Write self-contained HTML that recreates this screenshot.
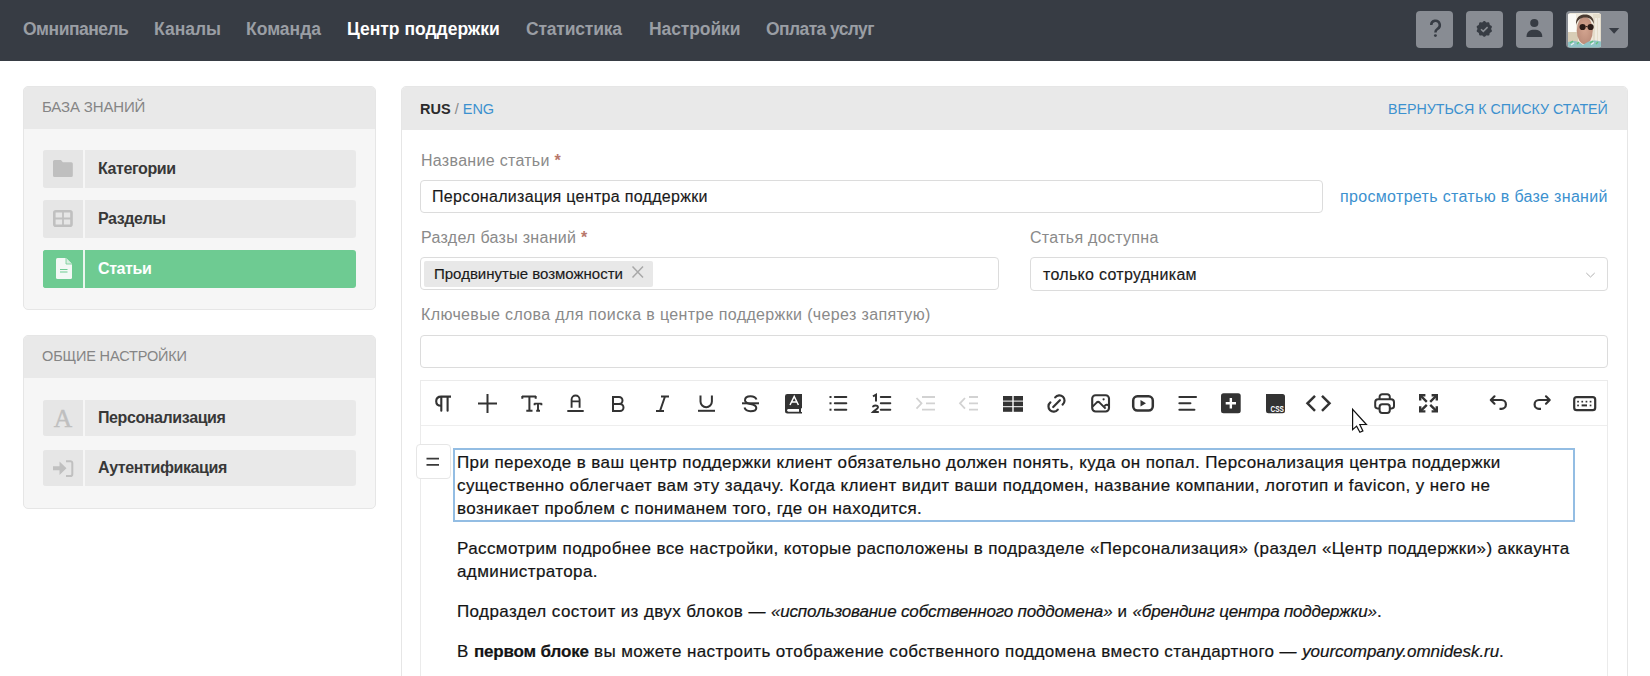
<!DOCTYPE html>
<html><head><meta charset="utf-8">
<style>
*{box-sizing:border-box;margin:0;padding:0}
html,body{width:1650px;height:676px;overflow:hidden;background:#fff;font-family:"Liberation Sans",sans-serif;position:relative}
.a{position:absolute;white-space:nowrap}
#hdr{position:absolute;left:0;top:0;width:1650px;height:61px;background:#373c44}
.nav{position:absolute;top:17px;font-weight:bold;font-size:17.5px;line-height:24px;color:#9a9ea4}
.hbtn{position:absolute;top:11px;width:37px;height:37px;background:#888c93;border-radius:4px;overflow:hidden}
.panel{position:absolute;background:#f6f6f6;border:1px solid #e6e6e6;border-radius:5px;overflow:hidden}
.ph{position:absolute;left:0;top:0;right:0;height:42px;background:#e9e9e9}
.pht{position:absolute;left:18px;top:11px;font-size:15px;line-height:18px;color:#858585;letter-spacing:-0.15px}
.btn{position:absolute;left:19px;width:313px;height:38px;background:#e9e9e9;border-radius:3px;overflow:hidden}
.btn .ic{position:absolute;left:0;top:0;width:42px;height:38px;background:#e6e6e6;border-right:2px solid #f6f6f6}
.btn .t{position:absolute;left:55px;top:9.5px;font-weight:bold;font-size:16px;line-height:18px;color:#383838;letter-spacing:-0.4px}
.btn svg{position:absolute;left:0;top:0}
.btn.act{background:#6ecb92}
.btn.act .ic{background:#6ecb92;border-right:2px solid #e9f6ee}
.btn.act .t{color:#fff}
.lbl{position:absolute;font-size:16px;line-height:20px;color:#8a8a8a;letter-spacing:0.3px}
.lbl b{color:#b8786c;font-weight:bold}
.inp{position:absolute;border:1px solid #dcdcdc;border-radius:4px;background:#fff}
.txt{font-size:16px;line-height:20px;color:#1a1a1a;letter-spacing:0.3px;-webkit-text-stroke:0.15px #1a1a1a}
.body{position:absolute;left:457px;font-size:17px;line-height:23px;color:#141414;-webkit-text-stroke:0.2px #141414;letter-spacing:0.4px;white-space:nowrap}
.body i{letter-spacing:-0.05px}
.body b{letter-spacing:-0.15px}
</style></head><body>

<div id="hdr">
  <div class="nav a" style="left:23px;letter-spacing:-0.5px">Омнипанель</div>
  <div class="nav a" style="left:154px">Каналы</div>
  <div class="nav a" style="left:246px">Команда</div>
  <div class="nav a" style="left:347px;color:#fff">Центр поддержки</div>
  <div class="nav a" style="left:526px;letter-spacing:-0.2px">Статистика</div>
  <div class="nav a" style="left:649px;letter-spacing:-0.1px">Настройки</div>
  <div class="nav a" style="left:766px;letter-spacing:-0.6px">Оплата услуг</div>

  <div class="hbtn" style="left:1416px"></div>
  <div class="hbtn" style="left:1466px"></div>
  <div class="hbtn" style="left:1516px"></div>
  <div class="hbtn" style="left:1566px;width:62px"></div>
</div>

<!-- left panel 1 -->
<div class="panel" style="left:23px;top:86px;width:353px;height:224px">
  <div class="ph"><div class="pht a">БАЗА ЗНАНИЙ</div></div>
  <div class="btn" style="top:63px"><div class="ic"></div><div class="t a">Категории</div></div>
  <div class="btn" style="top:113px"><div class="ic"></div><div class="t a">Разделы</div></div>
  <div class="btn act" style="top:163px"><div class="ic"></div><div class="t a">Статьи</div></div>
</div>

<!-- left panel 2 -->
<div class="panel" style="left:23px;top:335px;width:353px;height:174px">
  <div class="ph"><div class="pht a" style="font-size:14.5px">ОБЩИЕ НАСТРОЙКИ</div></div>
  <div class="btn" style="top:64px;height:36px"><div class="ic" style="height:36px"></div><div class="t a" style="top:9px">Персонализация</div></div>
  <div class="btn" style="top:114px;height:36px"><div class="ic" style="height:36px"></div><div class="t a" style="top:9px">Аутентификация</div></div>
</div>

<!-- main panel -->
<div class="panel" style="left:401px;top:86px;width:1227px;height:620px;background:#fff">
  <div class="ph" style="height:43px"></div>
</div>
<div class="a" style="left:420px;top:100px;font-size:14.5px;line-height:18px;color:#888"><b style="color:#2b2b2b">RUS</b> / <span style="color:#3c91cf">ENG</span></div>
<div class="a" style="left:1388px;top:99.5px;font-size:14.25px;line-height:18px;color:#3c91cf">ВЕРНУТЬСЯ К СПИСКУ СТАТЕЙ</div>

<div class="lbl a" style="left:421px;top:151px">Название статьи <b>*</b></div>
<div class="inp" style="left:420px;top:180px;width:903px;height:33px"></div>
<div class="txt a" style="left:432px;top:187px">Персонализация центра поддержки</div>
<div class="a" style="left:1340px;top:187px;font-size:16px;line-height:20px;color:#3c91cf;letter-spacing:0.33px">просмотреть статью в базе знаний</div>

<div class="lbl a" style="left:421px;top:228px">Раздел базы знаний <b>*</b></div>
<div class="inp" style="left:420px;top:257px;width:579px;height:33px"></div>
<div class="a" style="left:424px;top:261px;width:229px;height:26px;background:#e8e8e8;border-radius:2px"></div>
<div class="a" style="left:434px;top:264px;font-size:15px;line-height:20px;color:#1a1a1a;-webkit-text-stroke:0.15px #1a1a1a">Продвинутые возможности</div>

<div class="lbl a" style="left:1030px;top:228px">Статья доступна</div>
<div class="inp" style="left:1030px;top:257px;width:578px;height:34px"></div>
<div class="txt a" style="left:1043px;top:265px">только сотрудникам</div>

<div class="lbl a" style="left:421px;top:305px;letter-spacing:0.36px">Ключевые слова для поиска в центре поддержки (через запятую)</div>
<div class="inp" style="left:420px;top:335px;width:1188px;height:33px"></div>

<!-- editor -->
<div class="a" style="left:420px;top:380px;width:1188px;height:300px;border:1px solid #ebebeb;border-bottom:none"></div>
<div class="a" style="left:421px;top:425px;width:1186px;height:1px;background:#eeeeee"></div>

<div class="a" style="left:416px;top:444px;width:35px;height:35px;border:1px solid #e6e6e6;border-radius:4px;background:#fff"></div>
<div class="a" style="left:453px;top:448px;width:1122px;height:74px;border:2px solid #93bde3"></div>

<div class="body" style="top:451px">При переходе в ваш центр поддержки клиент обязательно должен понять, куда он попал. Персонализация центра поддержки</div>
<div class="body" style="top:474px">существенно облегчает вам эту задачу. Когда клиент видит ваши поддомен, название компании, логотип и favicon, у него не</div>
<div class="body" style="top:497px">возникает проблем с пониманем того, где он находится.</div>
<div class="body" style="top:537px">Рассмотрим подробнее все настройки, которые расположены в подразделе «Персонализация» (раздел «Центр поддержки») аккаунта</div>
<div class="body" style="top:559.5px">администратора.</div>
<div class="body" style="top:600px">Подраздел состоит из двух блоков — <i style="letter-spacing:-0.16px">«использование собственного поддомена»</i> и <i style="letter-spacing:-0.2px">«брендинг центра поддержки»</i>.</div>
<div class="body" style="top:639.5px">В <b>первом блоке</b> вы можете настроить отображение собственного поддомена вместо стандартного — <i>yourcompany.omnidesk.ru</i>.</div>

<!-- overlay icons -->
<svg class="a" style="left:0;top:0" width="1650" height="676" viewBox="0 0 1650 676">
 <g fill="none" stroke="#333" stroke-width="2" stroke-linecap="butt">
  <!-- 1 pilcrow -->
  <path d="M451,396.6 H441.2 C438,396.6 436.2,398.6 436.2,401.2 C436.2,403.8 438,405.8 441.2,405.8" stroke-width="2.1"/>
  <path d="M441.3,397 V410.8 M447.6,397 V410.8" stroke-width="2.1" stroke-linecap="round"/>
  <!-- 2 plus -->
  <path d="M478,403.5 H497 M487.5,394 V413"/>
  <!-- 3 Tt -->
  <path d="M522,396.4 H536 M522.3,396 V398.8 M535.7,396 V398.8 M529.4,396.4 V410.8 M526.3,410.8 H532.5" stroke-width="2"/>
  <path d="M534.3,403.6 H541.7 M534.6,403.2 V405.3 M541.4,403.2 V405.3 M538,403.6 V410.8 M536.2,410.8 H540" stroke-width="1.9"/>
  <!-- 4 A underline -->
  <path d="M571.6,407.8 V399.6 A4,4.1 0 0 1 579.6,399.6 V407.8 M571.6,401.4 H579.6" stroke-width="1.9"/>
  <path d="M567.3,411 H583.7" stroke-width="2"/>
  <!-- 5 B -->
  <path d="M613,397 H619 A3.5,3.5 0 0 1 619,404 H613 Z M613,404 H620 A3.5,3.5 0 0 1 620,411 H613 Z"/>
  <!-- 6 I -->
  <path d="M661,396.5 H669 M656,411 H664 M665,396.5 L660,411"/>
  <!-- 7 U -->
  <path d="M700.5,395.5 V401.5 A5.7,5.7 0 0 0 711.9,401.5 V395.5"/>
  <path d="M698,410.8 H715"/>
  <!-- 8 S -->
  <path d="M756.5,399.5 C755.5,396.8 753,396.2 750.5,396.2 C747,396.2 745,397.8 745,400.3 C745,403 748,403.5 750.5,404 C754,404.6 756.3,405.8 756.3,408 C756.3,410.5 753.5,411.2 750.5,411.2 C747.5,411.2 745.3,410 744.5,407.5"/>
  <path d="M742,403.3 H759"/>
  <!-- 10 list -->
  <path d="M834.8,397 H846.3 M834.8,403.3 H846.3 M834.8,409.7 H846.3" stroke-linecap="round"/>
  <rect x="829.5" y="396" width="2" height="2" fill="#333" stroke="none"/>
  <rect x="829.5" y="402.3" width="2" height="2" fill="#333" stroke="none"/>
  <rect x="829.5" y="408.7" width="2" height="2" fill="#333" stroke="none"/>
  <!-- 11 numbered -->
  <path d="M880.8,397 H890.3 M880.8,403.3 H890.3 M880.8,409.7 H890.3" stroke-linecap="round"/>
  <path d="M873,396.3 L876,394.6 V401.6" stroke-width="2"/>
  <path d="M873,407.3 C873,405 878,404.8 878,407.3 C878,408.8 874.5,410.5 873,412 H878.8" stroke-width="1.9"/>
  <!-- 12 indent (disabled) -->
  <g stroke="#d2d2d2" stroke-width="1.8">
   <path d="M916.5,398 L921.5,403.3 L916.5,408.6"/>
   <path d="M922,397 H935 M926,403.3 H935 M922,409.7 H935"/>
   <path d="M965,398 L960,403.3 L965,408.6"/>
   <path d="M969,397 H978 M969,403.3 H978 M969,409.7 H978"/>
  </g>
  <!-- 14 table -->
  <g fill="#333" stroke="none">
   <rect x="1003" y="396" width="9.3" height="4.6"/><rect x="1013.7" y="396" width="9.3" height="4.6"/>
   <rect x="1003" y="401.6" width="9.3" height="4.6"/><rect x="1013.7" y="401.6" width="9.3" height="4.6"/>
   <rect x="1003" y="407.2" width="9.3" height="4.6"/><rect x="1013.7" y="407.2" width="9.3" height="4.6"/>
  </g>
  <!-- 15 link -->
  <g stroke-width="2.2" stroke-linecap="round">
   <path d="M1055.2,397.4 A5.2,5.2 0 1 1 1062.6,404.6"/>
   <path d="M1057.8,409.6 A5.2,5.2 0 1 1 1050.4,402.4"/>
   <path d="M1053.2,407 L1059.9,400.2"/>
  </g>
  <!-- 16 image -->
  <rect x="1092.2" y="395.2" width="16.8" height="16.3" rx="3.4" stroke-width="2.1"/>
  <path d="M1092.6,406.6 L1096.6,402.6 Q1098.1,401.2 1099.6,402.6 L1105.6,408.6" stroke-width="2"/>
  <path d="M1104.3,406.3 Q1106.6,403.6 1109,405.9" stroke-width="2"/>
  <circle cx="1103.6" cy="399.3" r="1.1" fill="#333" stroke="none"/>
  <!-- 17 video -->
  <rect x="1133.2" y="396.3" width="19.6" height="14.2" rx="4.2" stroke-width="2.5"/>
  <path d="M1140.5,400 V406.6 L1146,403.3 Z" fill="#333" stroke="none"/>
  <!-- 18 align -->
  <path d="M1179.4,397 H1196 M1179.4,403.3 H1190.4 M1179.4,409.7 H1194.4" stroke-width="2.1" stroke-linecap="round"/>
  <!-- 19 plus box -->
  <rect x="1221" y="393.3" width="19.7" height="19.9" rx="2.5" fill="#333" stroke="none"/>
  <path d="M1225.7,403.2 H1236 M1230.85,398 V408.4" stroke="#fff" stroke-width="2.4"/>
  <!-- 20 css -->
  <path d="M1266,394 H1282.5 A2.5,2.5 0 0 1 1285,396.5 V410.8 A2.5,2.5 0 0 1 1282.5,413.3 H1268.5 A2.5,2.5 0 0 1 1266,410.8 Z" fill="#333" stroke="none"/>
  <text x="1270.5" y="411.8" font-family="Liberation Sans" font-weight="bold" font-size="9.4" fill="#fff" stroke="none" stroke-width="0" textLength="13.4" lengthAdjust="spacingAndGlyphs">CSS</text>
  <!-- 21 code -->
  <path d="M1315,395.8 L1307.5,403.3 L1315,410.8 M1322,395.8 L1329.5,403.3 L1322,410.8" stroke-width="2.5"/>
  <!-- 22 print -->
  <path d="M1379.6,399.3 V397 A2.7,2.7 0 0 1 1382.3,394.2 H1387.1 A2.7,2.7 0 0 1 1389.8,397 V399.3"/>
  <path d="M1379.6,408.4 H1377.5 A2.3,2.3 0 0 1 1375.2,406.1 V402.3 A3,3 0 0 1 1378.2,399.3 H1391 A3,3 0 0 1 1394,402.3 V406.1 A2.3,2.3 0 0 1 1391.7,408.4 H1389.8"/>
  <rect x="1379.6" y="404.3" width="10.2" height="8.6" rx="2.6"/>
  <!-- 23 fullscreen -->
  <g stroke-width="2.4">
   <path d="M1420.5,395.5 L1426.8,401.8 M1436.5,395.5 L1430.2,401.8 M1420.5,411.2 L1426.8,404.9 M1436.5,411.2 L1430.2,404.9"/>
   <path d="M1420.2,400.5 V395.3 H1425.4 M1431.6,395.3 H1436.8 V400.5 M1420.2,406.2 V411.4 H1425.4 M1431.6,411.4 H1436.8 V406.2"/>
  </g>
  <!-- 24 undo -->
  <path d="M1494.5,396.3 L1490.8,400 L1494.5,403.7" stroke-width="2.2" stroke-linecap="round" stroke-linejoin="round"/>
  <path d="M1491,400 H1501.5 A4.4,4.4 0 0 1 1501.5,408.8 H1499.5" stroke-width="2.2"/>
  <!-- 25 redo -->
  <path d="M1546,396.3 L1549.7,400 L1546,403.7" stroke-width="2.2" stroke-linecap="round" stroke-linejoin="round"/>
  <path d="M1549.5,400 H1539 A4.4,4.4 0 0 0 1539,408.8 H1541" stroke-width="2.2"/>
  <!-- 26 keyboard -->
  <rect x="1574.2" y="397.2" width="21" height="13" rx="2.5" stroke-width="2.2"/>
  <g fill="#333" stroke="none">
   <rect x="1577.2" y="400.8" width="1.7" height="1.7"/><rect x="1581.4" y="400.8" width="1.7" height="1.7"/><rect x="1585.6" y="400.8" width="1.7" height="1.7"/><rect x="1589.7" y="400.8" width="1.7" height="1.7"/>
   <rect x="1577.2" y="404.6" width="1.7" height="1.7"/><rect x="1581.6" y="404.4" width="5.4" height="2"/><rect x="1589.7" y="404.6" width="1.7" height="1.7"/>
  </g>
 </g>
 <!-- 9 A filled -->
 <path d="M787.3,394 H802 V408.2 H801 V412 H802 V413.5 H787.5 A2.5,2.5 0 0 1 785,411 V396.3 A2.3,2.3 0 0 1 787.3,394 Z" fill="#333"/>
 <path d="M790,405 L794.2,396.5 L798.4,405 M791.3,402 H797.1" fill="none" stroke="#fff" stroke-width="1.5" stroke-linejoin="miter"/>
 <path d="M788.5,409 H799 V411.7 H788.5 A1.35,1.35 0 0 1 788.5,409 Z" fill="#fff"/>
 <!-- cursor -->
 <path d="M1352.6,409.4 V429.6 L1356.6,426.1 L1359.9,432.3 L1362.9,430.9 L1359.8,424.5 H1366.4 Z" fill="#fff" stroke="#111" stroke-width="1.2" stroke-linejoin="miter"/>
 <!-- drag handle lines -->
 <path d="M426.5,458.7 H439 M426.5,464.8 H439" stroke="#3a3a3a" stroke-width="1.7"/>
 <!-- tag x -->
 <path d="M632.5,266.5 L643,277.5 M643,266.5 L632.5,277.5" stroke="#a8a8a8" stroke-width="1.5"/>
 <!-- select chevron -->
 <path d="M1586.3,273 L1590.5,277 L1594.7,273" fill="none" stroke="#b0b0b0" stroke-width="1"/>
 <!-- left panel icons -->
 <path d="M53,161.5 A1.5,1.5 0 0 1 54.5,160 H61 L62.8,162.2 H71.3 A1.5,1.5 0 0 1 72.8,163.7 V175.4 A1.5,1.5 0 0 1 71.3,176.9 H54.5 A1.5,1.5 0 0 1 53,175.4 Z" fill="#bfbfbf"/>
 <rect x="54.3" y="211.3" width="17.2" height="14.5" rx="1.5" fill="none" stroke="#c0c0c0" stroke-width="2.6"/>
 <path d="M63,211 V226 M54,218.5 H72" stroke="#c0c0c0" stroke-width="1.8"/>
 <path d="M57.5,258 H66 L72,264 V277.5 A1.5,1.5 0 0 1 70.5,279 H57.5 A1.5,1.5 0 0 1 56,277.5 V259.5 A1.5,1.5 0 0 1 57.5,258 Z" fill="#f3f8f5"/>
 <path d="M66,258 V264 H72" fill="#d8eee0" stroke="#6ecb92" stroke-width="0.8"/>
 <path d="M60,269.5 H67.5 M60,272 H67.5" stroke="#6ecb92" stroke-width="1.2"/>
 <text x="63" y="427" font-family="Liberation Serif" font-size="25.5" fill="#bfbfbf" stroke="#bfbfbf" stroke-width="0.45" text-anchor="middle">A</text>
 <path d="M53,466.3 H59.5 V461.5 L66.5,468.2 L59.5,475 V470.2 H53 Z" fill="#c0c0c0"/>
 <path d="M66,461.2 H70.5 A1.8,1.8 0 0 1 72.3,463 V474.3 A1.8,1.8 0 0 1 70.5,476.1 H66" fill="none" stroke="#c0c0c0" stroke-width="2"/>
 <!-- header icons -->
 <path d="M1431.2,25 A4.3,4.3 0 1 1 1437.6,28.8 C1436,29.9 1435.4,30.8 1435.4,32.6" fill="none" stroke="#373c44" stroke-width="2.5"/>
 <circle cx="1435.4" cy="35.6" r="1.45" fill="#373c44"/>
 <path id="badge" fill="#373c44" d="M1484.30,20.95 L1484.55,20.98 L1484.79,21.07 L1485.03,21.21 L1485.25,21.39 L1485.46,21.59 L1485.65,21.80 L1485.84,21.99 L1486.03,22.16 L1486.22,22.30 L1486.42,22.39 L1486.63,22.43 L1486.86,22.43 L1487.11,22.41 L1487.38,22.36 L1487.66,22.31 L1487.95,22.27 L1488.23,22.25 L1488.50,22.28 L1488.75,22.35 L1488.97,22.47 L1489.16,22.64 L1489.30,22.86 L1489.41,23.11 L1489.48,23.38 L1489.53,23.67 L1489.57,23.95 L1489.61,24.22 L1489.66,24.47 L1489.73,24.69 L1489.84,24.87 L1489.99,25.03 L1490.17,25.17 L1490.39,25.30 L1490.64,25.42 L1490.89,25.54 L1491.15,25.68 L1491.39,25.83 L1491.59,26.01 L1491.75,26.22 L1491.86,26.44 L1491.91,26.69 L1491.90,26.95 L1491.84,27.22 L1491.74,27.48 L1491.61,27.74 L1491.47,27.99 L1491.35,28.23 L1491.24,28.46 L1491.17,28.68 L1491.15,28.90 L1491.17,29.12 L1491.24,29.34 L1491.35,29.57 L1491.47,29.81 L1491.61,30.06 L1491.74,30.32 L1491.84,30.58 L1491.90,30.85 L1491.91,31.11 L1491.86,31.36 L1491.75,31.58 L1491.59,31.79 L1491.39,31.97 L1491.15,32.12 L1490.89,32.26 L1490.64,32.38 L1490.39,32.50 L1490.17,32.63 L1489.99,32.77 L1489.84,32.93 L1489.73,33.11 L1489.66,33.33 L1489.61,33.58 L1489.57,33.85 L1489.53,34.13 L1489.48,34.42 L1489.41,34.69 L1489.30,34.94 L1489.16,35.16 L1488.97,35.33 L1488.75,35.45 L1488.50,35.52 L1488.23,35.55 L1487.95,35.53 L1487.66,35.49 L1487.38,35.44 L1487.11,35.39 L1486.86,35.37 L1486.63,35.37 L1486.42,35.41 L1486.22,35.50 L1486.03,35.64 L1485.84,35.81 L1485.65,36.00 L1485.46,36.21 L1485.25,36.41 L1485.03,36.59 L1484.79,36.73 L1484.55,36.82 L1484.30,36.85 L1484.05,36.82 L1483.81,36.73 L1483.57,36.59 L1483.35,36.41 L1483.14,36.21 L1482.95,36.00 L1482.76,35.81 L1482.57,35.64 L1482.38,35.50 L1482.18,35.41 L1481.97,35.37 L1481.74,35.37 L1481.49,35.39 L1481.22,35.44 L1480.94,35.49 L1480.65,35.53 L1480.37,35.55 L1480.10,35.52 L1479.85,35.45 L1479.63,35.33 L1479.44,35.16 L1479.30,34.94 L1479.19,34.69 L1479.12,34.42 L1479.07,34.13 L1479.03,33.85 L1478.99,33.58 L1478.94,33.33 L1478.87,33.11 L1478.76,32.93 L1478.61,32.77 L1478.43,32.63 L1478.21,32.50 L1477.96,32.38 L1477.71,32.26 L1477.45,32.12 L1477.21,31.97 L1477.01,31.79 L1476.85,31.58 L1476.74,31.36 L1476.69,31.11 L1476.70,30.85 L1476.76,30.58 L1476.86,30.32 L1476.99,30.06 L1477.13,29.81 L1477.25,29.57 L1477.36,29.34 L1477.43,29.12 L1477.45,28.90 L1477.43,28.68 L1477.36,28.46 L1477.25,28.23 L1477.13,27.99 L1476.99,27.74 L1476.86,27.48 L1476.76,27.22 L1476.70,26.95 L1476.69,26.69 L1476.74,26.44 L1476.85,26.22 L1477.01,26.01 L1477.21,25.83 L1477.45,25.68 L1477.71,25.54 L1477.96,25.42 L1478.21,25.30 L1478.43,25.17 L1478.61,25.03 L1478.76,24.87 L1478.87,24.69 L1478.94,24.47 L1478.99,24.22 L1479.03,23.95 L1479.07,23.67 L1479.12,23.38 L1479.19,23.11 L1479.30,22.86 L1479.44,22.64 L1479.63,22.47 L1479.85,22.35 L1480.10,22.28 L1480.37,22.25 L1480.65,22.27 L1480.94,22.31 L1481.22,22.36 L1481.49,22.41 L1481.74,22.43 L1481.97,22.43 L1482.18,22.39 L1482.38,22.30 L1482.57,22.16 L1482.76,21.99 L1482.95,21.80 L1483.14,21.59 L1483.35,21.39 L1483.57,21.21 L1483.81,21.07 L1484.05,20.98 Z"/>
 <path d="M1481,29.2 L1483.3,31.4 L1487.6,27.1" fill="none" stroke="#8a8e94" stroke-width="1.5"/>
 <circle cx="1534.3" cy="23" r="4.1" fill="#373c44"/>
 <path d="M1526.5,37 C1526.5,31.5 1530,29.8 1534.3,29.8 C1538.6,29.8 1542.3,31.5 1542.3,37 Z" fill="#373c44"/>
 <path d="M1608.9,28 H1619.3 L1614.1,33.8 Z" fill="#373c44"/>

 <!-- avatar -->
 <defs><clipPath id="av"><rect x="1568" y="12.9" width="33" height="34.5" rx="2.5"/></clipPath>
 <radialGradient id="skin" cx="0.5" cy="0.45" r="0.6"><stop offset="0" stop-color="#d4a590"/><stop offset="1" stop-color="#b98a78"/></radialGradient></defs>
 <g clip-path="url(#av)">
  <rect x="1568" y="12.9" width="33" height="34.5" fill="#efe9dc"/>
  <rect x="1568" y="14" width="8" height="18" fill="#fbfaf6"/>
  <rect x="1593" y="14" width="8" height="30" fill="#e4ddcc"/>
  <path d="M1596,18 V42 M1599,18 V42" stroke="#f8f6f0" stroke-width="1.2"/>
  <rect x="1568" y="32" width="10" height="12" fill="#d8cdb6"/>
  <ellipse cx="1584.8" cy="30.5" rx="8" ry="13.8" fill="url(#skin)"/>
  <path d="M1576,25 C1575.5,17 1580,14.5 1585,14.5 C1590,14.5 1594,17 1593.8,24 C1592,19 1589,17.6 1585,17.6 C1581,17.6 1577.5,19.5 1576,25 Z" fill="#4a3a30"/>
  <circle cx="1582.6" cy="27" r="3.1" fill="#2a1c18"/>
  <circle cx="1590.6" cy="27" r="3.1" fill="#2a1c18"/>
  <path d="M1585.7,26.6 H1587.5" stroke="#2a1c18" stroke-width="1"/>
  <path d="M1568,42 C1574,40 1578,40.5 1583,45 C1589,40.5 1594,39.5 1601,41.5 V48 H1568 Z" fill="#8fc3c6"/><path d="M1571,45 L1574,43 M1591,44.5 L1594,42.5" stroke="#e8f3f0" stroke-width="1.2"/>
  <path d="M1570,43 L1573,41 M1577,44 L1579,42 M1590,43 L1593,41 M1596,44 L1598,42" stroke="#5fc27a" stroke-width="1.3"/>
 </g>
</svg>

</body></html>
